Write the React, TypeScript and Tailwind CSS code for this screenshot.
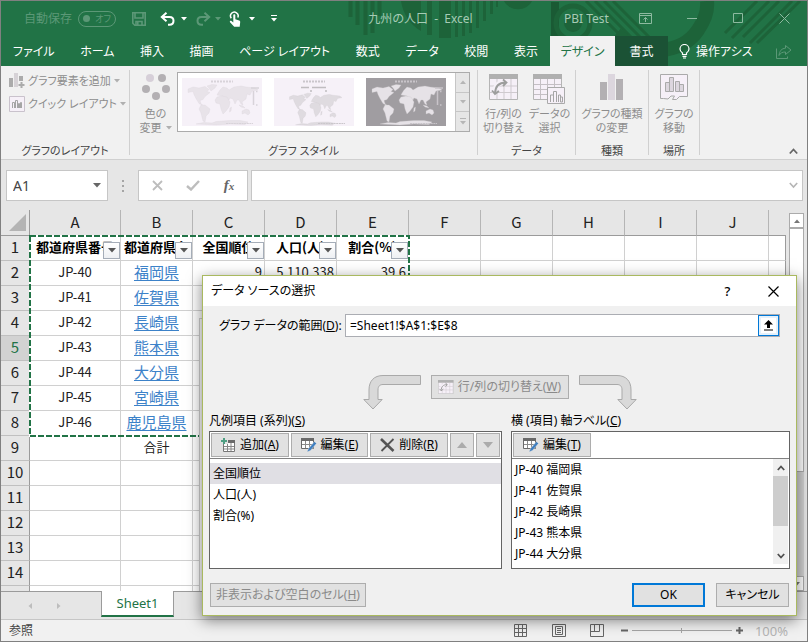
import { useState } from 'react';
import type { ReactNode } from 'react';

const tabs = ['ファイル', 'ホーム', '挿入', '描画', 'ページ レイアウト', '数式', 'データ', '校閲', '表示'];
const columns = ['A', 'B', 'C', 'D', 'E', 'F', 'G', 'H', 'I', 'J', ''];
const headings = ['都道府県番号', '都道府県名', '全国順位', '人口(人)', '割合(%)'];
const prefectures = [
  { code: 'JP-40', name: '福岡県' },
  { code: 'JP-41', name: '佐賀県' },
  { code: 'JP-42', name: '長崎県' },
  { code: 'JP-43', name: '熊本県' },
  { code: 'JP-44', name: '大分県' },
  { code: 'JP-45', name: '宮崎県' },
  { code: 'JP-46', name: '鹿児島県' },
];
const rows = Array.from({ length: 14 }, (_, i) => i + 1);
const series = ['全国順位', '人口(人)', '割合(%)'];

const Caret = ({ className = '' }: { className?: string }) => (
  <svg viewBox="0 0 6 4" className={`w-[6px] h-[4px] shrink-0 fill-current ${className}`}>
    <path d="M0 0h6L3 3.5z" />
  </svg>
);

const SaveIcon = () => (
  <svg viewBox="0 0 14 14" className="w-[14px] h-[14px] text-[#5c9877]" fill="none" stroke="currentColor" strokeWidth="1.6">
    <path d="M.8.8h12.4v12.4H2.8L.8 11.2zM3 1v5h8V1M4 13V9.5h6V13" />
    <path d="M5.8 10v3" />
  </svg>
);

const UndoIcon = ({ className }: { className: string }) => (
  <svg viewBox="0 0 15 14" className={`w-[15px] h-[14px] ${className}`} fill="none" stroke="currentColor" strokeWidth="2">
    <path d="M2 5h7.5c2.6 0 4 1.600 4 3.800S12 12.800 9.500 12.800H8" />
    <path d="M6.500.8L1.800 5l4.700 4.200" />
  </svg>
);

const TouchIcon = () => (
  <svg viewBox="0 0 12 16" className="w-[12px] h-[16px] text-white" fill="none">
    <path d="M2.300 7.200A3.800 3.800 0 1 1 8.800 6.500" stroke="currentColor" strokeWidth="1.500" />
    <path d="M4.300 4.200c0-1.400 2-1.400 2 0v4l3.800 1.200c.9.300 1.200.8 1.100 1.700l-.5 4.700H5.200L1 11.200c-.7-1 .6-1.900 1.500-1.200l1.800 1.400z" fill="currentColor" />
  </svg>
);

const ChartElementIcon = () => (
  <svg viewBox="0 0 16 16" className="w-4 h-4 shrink-0">
    <path d="M0 5h4v9H0z" fill="#ababab" />
    <path d="M5 0h4v14H5z" fill="#d6d2d6" />
    <path d="M10 3h4v5h-4z" fill="#ababab" />
    <path d="M12.500 9v6M9.500 12h6" stroke="#ababab" strokeWidth="2" />
  </svg>
);

const QuickLayoutIcon = () => (
  <svg viewBox="0 0 16 16" className="w-4 h-4 shrink-0" fill="none">
    <path d="M.5.5h15v15H.5z" fill="#f6f0f8" stroke="#c9c2cc" />
    <path d="M3.500 12V6.500h2V12M6.500 12V4.500h2V12M9.500 12V7.500h1V12M11.500 12V6.500h1V12" stroke="#a5a5a5" />
  </svg>
);

const ColorDotsIcon = () => (
  <svg viewBox="0 0 28 26" className="w-[28px] h-[26px]" fill="#b3b0b3">
    <circle cx="8" cy="4" r="4" fill="#d6cfd8" />
    <circle cx="20" cy="4" r="4" />
    <circle cx="4" cy="15" r="4" />
    <circle cx="24" cy="15" r="4" />
    <circle cx="14" cy="22" r="4" />
  </svg>
);

const SwapTableIcon = ({ className }: { className: string }) => (
  <svg viewBox="0 0 30 26" className={className} fill="none">
    <path d="M.5.5h28v25H.5z" fill="#f6f0f8" stroke="#b5b5b5" />
    <path d="M0 0h29v5H0z" fill="#b0b0b0" />
    <path d="M1 12h27M1 18.500h27M8 5v20M15 5v20M22 5v20" stroke="#cfcacf" />
    <path d="M5.500 19C6 11 10 8 17 8" stroke="#f6f0f8" strokeWidth="5" />
    <path d="M6 20C6 12 10 8.500 17 8.500M14 5.500l3.500 3-3.500 3.500M3 16.500L6 20l4-3" stroke="#9d9d9d" strokeWidth="1.800" />
  </svg>
);

const SelectDataIcon = () => (
  <svg viewBox="0 0 33 30" className="w-[33px] h-[30px]" fill="none">
    <path d="M.5.5h28v25H.5z" fill="#f6f0f8" stroke="#b5b5b5" />
    <path d="M0 0h29v5H0z" fill="#b0b0b0" />
    <path d="M1 10.500h27M1 15.500h27M1 20.500h27M7.500 5v20M14.500 5v20M21.500 5v20" stroke="#c4bfc4" />
    <path d="M14.500 13.500h17v16h-17z" fill="#f6f0f8" stroke="#aaa" />
    <path d="M17.500 28v-7h3v7M20.500 28V17.500h3V28M25.500 28v-7h2v7M27.500 28v-5h2v5z" stroke="#a5a5a5" />
  </svg>
);

const ChartTypeIcon = () => (
  <svg viewBox="0 0 24 26" className="w-[24px] h-[26px]">
    <path d="M0 8h7v18H0z" fill="#b3b0b3" />
    <path d="M8 0h7v26H8z" fill="#dcd6de" />
    <path d="M16 5h7v21h-7z" fill="#b3b0b3" />
  </svg>
);

const MoveChartIcon = () => (
  <svg viewBox="0 0 28 26" className="w-[28px] h-[26px]" fill="none" stroke="#aaa">
    <path d="M3.500 24.500H.5V.5h27v22h-8l-3 3h-4l2-3.500h-3.500l-3 3z" fill="#f6f0f8" />
    <path d="M5.500 17.500v-9h4v9zM9.500 17.500V3.500h4v14zM15.500 17.500v-10h4v10zM19.500 17.500v-7h4v7z" fill="#dcd6de" />
  </svg>
);

const EditTableIcon = () => (
  <svg viewBox="0 0 16 16" className="w-4 h-4 shrink-0" fill="none">
    <path d="M.5 1.500h12v10H.5z" fill="#fff" stroke="#6a6a6a" />
    <path d="M0 1h13v3H0z" fill="#6a6a6a" />
    <path d="M1 7.500h11M4.500 4v7M8.500 4v7" stroke="#8a8a8a" />
    <path d="M13.500 4.500L7.500 11.500 6 15l3.500-1.500 6-7z" fill="#3f7fc0" stroke="#e1e1e1" strokeWidth=".5" />
  </svg>
);

const AddTableIcon = () => (
  <svg viewBox="0 0 15 15" className="w-[15px] h-[15px] shrink-0" fill="none">
    <path d="M2.500 3.500h11v10h-11z" fill="#fff" stroke="#777" />
    <path d="M2 2h12v3H2z" fill="#6a6a6a" />
    <path d="M3 8.500h10M3 11h10M6.500 5v8M10 5v8" stroke="#888" />
    <path d="M0 0h7v6H0z" fill="#e1e1e1" />
    <path d="M3 0v6M0 3h6" stroke="#4f9f83" strokeWidth="2" />
  </svg>
);

const DeleteIcon = () => (
  <svg viewBox="0 0 15 14" className="w-[15px] h-[14px] shrink-0" fill="none" stroke="#555">
    <path d="M1 1l12.500 12" strokeWidth="2.600" />
    <path d="M13.500 1L1.500 13" strokeWidth="1.800" />
  </svg>
);

// Flow arrow from the swap button down to a list; the right one is mirrored
const BentArrow = ({ className = '' }: { className?: string }) => (
  <svg viewBox="0 0 58 35" className={`w-[58px] h-[35px] ${className}`} fill="#d9d9d9" stroke="#a9a9a9">
    <path d="M57.500.5H20C11 .5 6 6 6 15v9.500H.8L10 34l9.200-9.500H15V15c0-4 2-5.500 5-5.500h37.500z" />
  </svg>
);

const MapThumb = ({ bg, land, border, legendTop }: { bg: string; land: string; border: string; legendTop?: boolean }) => (
  <svg viewBox="0 0 80 48" className="w-[80px] h-[48px] block">
    <rect width="80" height="48" fill={bg} />
    <path d="M29 3.500h22" stroke={border} strokeWidth="2" strokeDasharray="2 1" />
    <g fill={land} stroke={border} strokeWidth=".3" transform={legendTop ? 'translate(11 10) scale(.75 .8)' : undefined}>
      <path d="M6 11l5-2 6 1 6-1.500 4 3-2 2 3 1-5 4-2 3-3 1 1 3 2 2-4-2-3-5-2-4-1-3-5 1z" />
      <path d="M25 8l5-1.500 5 .5-2 3-4 3-2-3z" />
      <path d="M19 27l4 0 5 4-1 4-3 3-1 6-2-1-2-8-2-4z" />
      <path d="M35 17l1-2 2-3 3-3 4 1 2 2 5-3 7-1 5 1 9 1 3 2-6 1-2 4-3-1-1 5-4 3 1 3-2-1-2-4-2 0-2 4-2-5-3-1-1 2-4-1-2-3z" />
      <path d="M35 19l5-1 5 1 3 5-1 5-3 4-3 3-2-5-1-5-4-1-1-3z" />
      <path d="M48 30l1.500-1-.5 4-1.500 1zM57 27l4 1 2 2-4-1z" />
      <path d="M60 33l4-2 3 1 1 3-2 2-3-2-3 1z" />
      <path d="M14 46l8-1.500 8 .5 4-1.500 14-1 10 0 8 1.500-3 2.500-15-.5-14 1z" />
    </g>
    {legendTop ? (
      <path d="M27 9.500h8M38 9.500h14M36 13h2M51 13h2" stroke="#c0bdc0" strokeWidth="1.500" />
    ) : (
      <path d="M69 10h8M71.500 13v14M74 13.500h1.500M74 27h1.500" stroke={border} strokeWidth="1.500" />
    )}
    <path d="M44 45.500h27" stroke={border} strokeWidth="1" strokeDasharray="2 .6" />
  </svg>
);

const RibbonGroup = ({ label, className = '', children }: { label: string; className?: string; children: ReactNode }) => (
  <section className={`flex flex-col justify-between shrink-0 my-1 border-r border-[#d0d0d0] ${className}`}>
    {children}
    <div className="h-4 -mb-1 shrink-0 leading-[16px] text-center text-[#444]">{label}</div>
  </section>
);

const BigButton = ({ icon, lines, className = '' }: { icon: ReactNode; lines: ReactNode[]; className?: string }) => (
  <button className={`flex flex-col items-center text-[#8d8d8d] leading-[14px] ${className}`}>
    <span className="h-[37px] flex items-start justify-center pt-1">{icon}</span>
    {lines.map((line, i) => (
      <span key={i} className="flex items-center gap-1 whitespace-nowrap">{line}</span>
    ))}
  </button>
);

const DialogButton = ({ className = '', disabled, children }: { className?: string; disabled?: boolean; children: ReactNode }) => (
  <button
    disabled={disabled}
    className={`h-[24px] flex items-center justify-center gap-1 bg-[#e1e1e1] border border-[#adadad] whitespace-nowrap ${disabled ? 'text-[#8a8a8a]' : ''} ${className}`}
  >
    {children}
  </button>
);

const TitleBar = () => (
  <div className="relative h-[35px] flex items-center text-[#a6cbb5]">
    <div className="w-[276px] pl-[23px] flex items-center shrink-0 text-[#5c9877]">
      <label htmlFor="autosave" className="w-[55px]">自動保存</label>
      <button id="autosave" className="w-[38px] h-[16px] border border-[#5c9877] rounded-full flex items-center justify-between pl-1 pr-1 text-[9px] leading-none">
        <span className="w-[7px] h-[7px] rounded-full bg-[#5c9877]" />
        オフ
      </button>
      <button aria-label="上書き保存" className="ml-4"><SaveIcon /></button>
      <button aria-label="元に戻す" className="ml-[14px] flex items-center gap-[6px] text-white"><UndoIcon className="text-white" /><Caret /></button>
      <button aria-label="やり直し" className="ml-[9px] flex items-center gap-1"><UndoIcon className="-scale-x-100" /><Caret /></button>
      <button aria-label="タッチ" className="ml-2 flex items-center gap-2 text-white"><TouchIcon /><Caret /></button>
      <button aria-label="カスタマイズ" className="ml-4 flex flex-col items-center gap-[2px] text-white">
        <span className="w-[6px] h-px bg-white" />
        <Caret />
      </button>
    </div>
    <div className="flex-1 text-center whitespace-pre">九州の人口  -  Excel</div>
    <div className="w-[243px] shrink-0 flex items-center text-[#8dbaa0]">
      <span className="w-[75px] text-[#a6cbb5] whitespace-nowrap">PBI Test</span>
      <button aria-label="リボンの表示オプション" className="w-[48px]">
        <svg viewBox="0 0 13 11" className="w-[13px] h-[11px]" fill="none" stroke="currentColor">
          <path d="M.5.500h12v10H.5zM.5 2.500h12M6.500 9V4.500M4.500 6.500l2-2 2 2" />
        </svg>
      </button>
      <button aria-label="最小化" className="w-[46px]"><svg viewBox="0 0 11 11" className="w-[11px] h-[11px]" stroke="currentColor"><path d="M0 5.500h10" /></svg></button>
      <button aria-label="最大化" className="w-[46px]"><svg viewBox="0 0 11 11" className="w-[11px] h-[11px]" fill="none" stroke="currentColor"><path d="M.5.500h9v9h-9z" /></svg></button>
      <button aria-label="閉じる"><svg viewBox="0 0 11 11" className="w-[11px] h-[11px]" stroke="currentColor"><path d="M.5.500l10 10M10.500.500l-10 10" /></svg></button>
    </div>
  </div>
);

const HeaderPattern = () => (
  <svg viewBox="0 0 462 65" className="absolute right-0 top-0 w-[462px] h-[65px]" fill="none" stroke="#1d6339">
    <path d="M5.500 0v16M12.500 0v24M20.500 0v34M27.500 0v32M34.500 0v15" strokeWidth="4" />
    <path d="M56 0c2 13 9 24 20 30V0zM82 0h5v34h-5zM94 0h12v37H94zM110 0h3v36h-3zM117 0h3v35h-3zM124 0h3v32h-3zM131 0h3v27h-3zM138 0h3v20h-3zM145 0h3v13h-3zM151 0h2v6h-2z" fill="#1d6339" stroke="none" />
    <path d="M159 0a15 13 0 0 0 28 0z" fill="#1d6339" stroke="none" />
    <path d="M206 1h8v34h-8z" fill="#1a5a34" stroke="none" />
    <circle cx="228" cy="22" r="17" strokeWidth="5" />
    <circle cx="228" cy="22" r="9" fill="#1d6339" stroke="none" />
    <path d="M241 0l36 36M250 0l36 36M259 0l36 36M268 0l36 36" strokeWidth="3" />
    <path d="M271 33c28 24 66 20 82-4 7-10 10-20 9-29" strokeWidth="14" />
    <path d="M380 32L412 0M387 37L424 0M398 36L434 0M405 42L447 0M412 42L455 0" strokeWidth="3" />
  </svg>
);

const TabRow = () => (
  <nav className="relative h-[30px] flex text-white leading-[29px]">
    <div className="flex-1 flex justify-between">
      {tabs.map((tab) => (
        <button key={tab} className="shrink-0 px-3 whitespace-nowrap">{tab}</button>
      ))}
    </div>
    <button className="w-[65px] shrink-0 bg-[#f1f1f1] text-[#217346]">デザイン</button>
    <button className="w-[53px] shrink-0 bg-[#1b5235]">書式</button>
    <button className="w-[96px] shrink-0 flex items-center pl-[11px] gap-[6px] whitespace-nowrap">
      <svg viewBox="0 0 11 15" className="w-[11px] h-[15px] shrink-0" fill="none" stroke="currentColor" strokeWidth="1.200">
        <path d="M3.500 10.500V9C2 8 1 6.800 1 5a4.500 4.500 0 0 1 9 0c0 1.800-1 3-2.500 4v1.500zM3.500 12.300h4M4 14h3" />
      </svg>
      操作アシス
    </button>
    <button aria-label="共有" className="w-[43px] shrink-0 flex items-center pl-3 text-[#5c9877]">
      <svg viewBox="0 0 16 15" className="w-4 h-[15px]" fill="none" stroke="currentColor">
        <path d="M.5 4.500v10h11v-2M9.500 1.500l5.500 4.500-5.500 4.500V8C6 8 4.500 9 3 11.500 3.500 7 5.500 4.500 9.500 4.200z" />
      </svg>
    </button>
  </nav>
);

const Ribbon = () => (
  <div className="h-[94px] shrink-0 flex bg-[#f1f1f1] border-b border-[#d0d0d0] text-[11px]">
    <RibbonGroup label="グラフのレイアウト" className="w-[129px]">
      <div className="flex flex-col gap-[7px] pl-2 pt-[3px] text-[#8d8d8d]">
        <button className="flex items-center gap-[3px] h-4 whitespace-nowrap"><ChartElementIcon />グラフ要素を追加<Caret className="text-[#b0b0b0]" /></button>
        <button className="flex items-center gap-[3px] h-4 whitespace-nowrap"><QuickLayoutIcon />クイック レイアウト<Caret className="text-[#b0b0b0]" /></button>
      </div>
    </RibbonGroup>
    <RibbonGroup label="グラフ スタイル" className="w-[348px]">
      <div className="flex">
        <BigButton className="w-[47px] pl-1" icon={<ColorDotsIcon />} lines={['色の', <>変更<Caret className="text-[#b0b0b0]" /></>]} />
        <div className="mt-[2px] w-[293px] h-[60px] flex border border-[#ababab] bg-white">
          <div className="flex-1 flex justify-between items-center pl-1 pr-[9px]">
            <button><MapThumb bg="#f6f1f8" land="#e8e3e9" border="#d8d3d9" /></button>
            <button><MapThumb bg="#f6f1f8" land="#dfdbe0" border="#cac6cb" legendTop /></button>
            <button><MapThumb bg="#a09da1" land="#e6e2e7" border="#c8c4c9" /></button>
          </div>
          <div className="w-[14px] flex flex-col border-l border-[#c6c6c6] bg-[#e6e6e6] text-[#b5b5b5] divide-y divide-[#c6c6c6]">
            <button aria-label="上へ" className="flex-1 flex items-center justify-center"><Caret className="rotate-180" /></button>
            <button aria-label="下へ" className="flex-1 flex items-center justify-center"><Caret /></button>
            <button aria-label="その他" className="flex-1 flex flex-col gap-[2px] items-center justify-center"><span className="w-[6px] h-px bg-[#b5b5b5]" /><Caret /></button>
          </div>
        </div>
      </div>
    </RibbonGroup>
    <RibbonGroup label="データ" className="w-[98px]">
      <div className="flex justify-center gap-1">
        <BigButton className="w-[42px]" icon={<SwapTableIcon className="w-[30px] h-[26px]" />} lines={['行/列の', '切り替え']} />
        <BigButton className="w-[42px]" icon={<SelectDataIcon />} lines={['データの', '選択']} />
      </div>
    </RibbonGroup>
    <RibbonGroup label="種類" className="w-[73px]">
      <BigButton icon={<ChartTypeIcon />} lines={['グラフの種類', 'の変更']} />
    </RibbonGroup>
    <RibbonGroup label="場所" className="w-[51px]">
      <BigButton icon={<MoveChartIcon />} lines={['グラフの', '移動']} />
    </RibbonGroup>
    <button aria-label="リボンを折りたたむ" className="ml-auto mr-[9px] mb-1 self-end">
      <svg viewBox="0 0 9 7" className="w-[9px] h-[7px]" fill="none" stroke="#666" strokeWidth="1.800"><path d="M.8 5.500l3.700-4 3.700 4" /></svg>
    </button>
  </div>
);

const FormulaBar = () => (
  <div className="h-[50px] shrink-0 flex pt-[10px] pl-[5px] pr-1">
    <div className="w-[102px] h-[31px] flex items-center shrink-0 bg-white border border-[#c6c6c6] pl-[6px] pr-[6px] text-[#666]">
      <input aria-label="名前ボックス" defaultValue="A1" className="w-0 flex-1 outline-none text-[14px] text-[#444]" />
      <svg viewBox="0 0 8 5" className="w-2 h-[5px] fill-current"><path d="M0 0h8L4 4.500z" /></svg>
    </div>
    <div className="w-[30px] h-[31px] flex flex-col gap-[3px] items-center justify-center shrink-0">
      <span className="size-[2px] bg-[#a5a5a5]" /><span className="size-[2px] bg-[#a5a5a5]" /><span className="size-[2px] bg-[#a5a5a5]" />
    </div>
    <div className="w-[110px] h-[31px] mr-[3px] flex items-center shrink-0 bg-white border border-[#c6c6c6]">
      <button aria-label="キャンセル" className="w-9 flex justify-center"><svg viewBox="0 0 11 11" className="w-[11px] h-[11px]" stroke="#bdbdbd" strokeWidth="1.800"><path d="M1 1l9 9M10 1l-9 9" /></svg></button>
      <button aria-label="入力" className="w-9 flex justify-center"><svg viewBox="0 0 14 11" className="w-[14px] h-[11px]" fill="none" stroke="#bdbdbd" strokeWidth="2.400"><path d="M1 6l4 3.500L13 1" /></svg></button>
      <button aria-label="関数の挿入" className="w-9 text-center font-['Liberation_Serif',serif] italic font-bold text-[15px] text-[#666]">f<span className="text-[11px]">x</span></button>
    </div>
    <div className="flex-1 h-[31px] flex items-center bg-white border border-[#c6c6c6]">
      <input aria-label="数式バー" className="flex-1 h-full outline-none px-1" />
      <svg viewBox="0 0 9 7" className="w-[9px] h-[7px] mr-1" fill="none" stroke="#b5b5b5" strokeWidth="1.600"><path d="M.8 1l3.700 4L8.200 1" /></svg>
    </div>
  </div>
);

const CellContent = ({ row, col }: { row: number; col: number }) => {
  if (row === 1 && headings[col]) {
    return (
      <div className="relative h-6 leading-[21px] text-center font-bold text-black overflow-hidden">
        <span className="whitespace-nowrap">{headings[col]}</span>
        <button aria-label={`${headings[col]} フィルター`} className="absolute right-0 bottom-px w-[17px] h-[17px] flex items-center justify-center bg-gradient-to-b from-white to-[#eef0f3] border border-[#a5adb8] text-[#555]">
          <svg viewBox="0 0 8 5" className="w-[8px] h-[5px] fill-current"><path d="M0 0h8L4 4.500z" /></svg>
        </button>
      </div>
    );
  }
  const pref = prefectures[row - 2];
  if (pref && col === 0) return <div className="pb-0.5 text-center">{pref.code}</div>;
  if (pref && col === 1) return <div className="pb-0.5 text-center text-[15px]"><a href="#" className="text-[#3c82c9] underline underline-offset-2">{pref.name}</a></div>;
  if (row === 9 && col === 1) return <div className="pb-0.5 text-center">合計</div>;
  if (row === 2 && col > 1 && col < 5) return <div className="pb-0.5 text-right pr-[2px]">{['9', '5,110,338', '39.6'][col - 2]}</div>;
  return null;
};

const Sheet = () => (
  <div className="flex-1 min-h-0 flex overflow-hidden">
    <div className="relative flex-1 min-w-0 overflow-hidden bg-white">
      <table className="w-full table-fixed border-separate border-spacing-0 text-[13px] leading-[20px] text-[#222] font-['Noto_Sans_CJK_JP',sans-serif]">
        <colgroup>
          <col className="w-[29px]" />
          <col className="w-[91px]" />
          {columns.slice(1, 10).map((c) => <col key={c} className="w-[72px]" />)}
          <col />
        </colgroup>
        <thead className="text-[15px] bg-[#e6e6e6]">
          <tr>
            <th className="h-[26px] p-0 border-r border-b border-[#9b9b9b]">
              <svg viewBox="0 0 17 17" className="w-[17px] h-[17px] ml-2"><path d="M17 0v17H0z" fill="#b4b4b4" /></svg>
            </th>
            {columns.map((c) => (
              <th key={c} className={`h-[26px] p-0 pb-0.5 font-normal border-b border-b-[#9b9b9b] ${c ? 'border-r border-r-[#b5b5b5]' : ''}`}>{c}</th>
            ))}
          </tr>
        </thead>
        <tbody>
          {rows.map((row) => (
            <tr key={row}>
              <th className={`h-[25px] p-0 pb-0.5 font-normal text-[15px] border-b border-b-[#c0c0c0] border-r ${row === 5 ? 'bg-[#d2d2d2] text-[#217346] border-r-[#217346]' : 'bg-[#e6e6e6] border-r-[#9b9b9b]'}`}>{row}</th>
              {columns.map((c, col) => (
                <td key={c} className={`h-[25px] p-0 border-b border-r border-b-[#d0d0d0] ${c ? 'border-r-[#d0d0d0]' : 'border-r-[#9b9b9b]'}`}>
                  <CellContent row={row} col={col} />
                </td>
              ))}
            </tr>
          ))}
          <tr>
            <th className="h-[25px] bg-[#e6e6e6] border-r border-[#9b9b9b]" />
            {columns.map((c) => <td key={c} className={`border-r ${c ? 'border-[#d0d0d0]' : 'border-[#9b9b9b]'}`} />)}
          </tr>
        </tbody>
      </table>
      {/* Marching ants around A1:E8 */}
      <svg className="absolute left-[28px] top-[25px] w-[381px] h-[202px] pointer-events-none" fill="none">
        <rect x="1" y="1" width="379" height="200" stroke="#fff" strokeWidth="2" />
        <rect x="1" y="1" width="379" height="200" stroke="#217346" strokeWidth="2" strokeDasharray="6 2" />
      </svg>
      {/* Chart object, mostly under the dialog */}
      <div className="absolute left-[198px] right-8 top-[108px] bottom-0 bg-white border-l border-t border-[#d0d0d0]" />
    </div>
    <div className="w-[21px] shrink-0 flex flex-col pl-[3px] pr-[3px] pt-[3px]">
      <button aria-label="上にスクロール" className="h-[15px] flex items-center justify-center bg-white border border-[#ababab] text-[#777]"><Caret className="rotate-180" /></button>
      <div className="h-[244px] bg-white border border-[#ababab]" />
      <div className="flex-1 bg-[#d0d0d0]" />
      <button aria-label="下にスクロール" className="h-[15px] flex items-center justify-center bg-white border border-[#ababab] text-[#777]"><Caret /></button>
    </div>
  </div>
);

const SheetTabs = () => (
  <div className="h-[28px] shrink-0 flex border-t border-[#9b9b9b]">
    <div className="w-[100px] pr-[14px] flex items-center justify-center gap-[23px] text-[#bdbdbd]">
      <button aria-label="前のシート"><Caret className="rotate-90" /></button>
      <button aria-label="次のシート"><Caret className="-rotate-90" /></button>
    </div>
    <button className="-mt-px w-[73px] h-[26px] bg-white border-x border-[#9b9b9b] border-b-2 border-b-[#217346] text-[#217346] text-[13px]">Sheet1</button>
  </div>
);

const StatusBar = () => (
  <footer className="h-[22px] shrink-0 flex items-center bg-[#f1f1f1] border-t border-[#c6c6c6] pl-2 pr-[19px] text-[#444]">
    <span>参照</span>
    <div className="ml-auto flex items-center text-[#666]">
      <button aria-label="標準" className="mr-[25px]"><svg viewBox="0 0 13 13" className="w-[13px] h-[13px]" fill="none" stroke="currentColor"><path d="M.5.500h12v12H.5zM.5 4.500h12M.5 8.500h12M4.500.500v12M8.500.500v12" /></svg></button>
      <button aria-label="ページ レイアウト" className="mr-[24px]"><svg viewBox="0 0 14 13" className="w-[14px] h-[13px]" fill="none" stroke="currentColor"><path d="M.5.500h13v12H.5zM3.500 2.500h7v8h-7zM5 4.500h4M5 6.500h4M5 8.500h4" /></svg></button>
      <button aria-label="改ページ プレビュー" className="mr-[17px]"><svg viewBox="0 0 14 13" className="w-[14px] h-[13px]" fill="none" stroke="currentColor"><path d="M.5.500h13v12H.5zM.5 7.500h9M4.500.500v7M9.500.500v7" /></svg></button>
      <button aria-label="縮小" className="mr-1"><svg viewBox="0 0 7 7" className="w-[7px] h-[7px]" stroke="currentColor" strokeWidth="2"><path d="M0 3.500h7" /></svg></button>
      <div className="w-[100px] h-px bg-[#a5a5a5] flex items-center justify-center"><span className="w-px h-[5px] shrink-0 bg-[#a5a5a5]" /></div>
      <button aria-label="拡大" className="ml-1"><svg viewBox="0 0 7 7" className="w-[7px] h-[7px]" stroke="currentColor" strokeWidth="2"><path d="M0 3.500h7M3.500 0v7" /></svg></button>
      <span className="ml-3 text-[13px] text-[#b5b5b5]">100%</span>
    </div>
  </footer>
);

const DataSourceDialog = () => {
  const [selected, setSelected] = useState(series[0]);

  return (
    <div role="dialog" aria-labelledby="dialog-title" className="absolute left-[201px] right-[10px] bottom-[25px] bg-[#f0f0f0] border border-[#a9b95f] shadow-[0_4px_14px_rgba(0,0,0,0.5)] text-black">
      <div className="h-[30px] flex items-center bg-white pl-2">
        <h2 id="dialog-title" className="flex-1">データ ソースの選択</h2>
        <button aria-label="ヘルプ" className="w-[45px] text-[13px] font-medium">?</button>
        <button aria-label="閉じる" className="w-[46px] flex justify-center"><svg viewBox="0 0 11 11" className="w-[11px] h-[11px]" stroke="#000" strokeWidth="1.200"><path d="M.5.500l10 10M10.500.500l-10 10" /></svg></button>
      </div>

      <div className="flex items-center mt-2 pl-4 pr-4">
        <label htmlFor="range" className="w-[126px] shrink-0 whitespace-nowrap">グラフ データの範囲(<u>D</u>):</label>
        <div className="flex-1 h-[23px] flex bg-white border border-[#abadb3]">
          <input id="range" defaultValue="=Sheet1!$A$1:$E$8" className="flex-1 min-w-0 px-1 outline-none" />
          <button aria-label="範囲を選択" className="w-[21px] flex items-center justify-center border border-[#0078d7] bg-[#e5f1fb]">
            <span className="w-[15px] h-[15px] bg-white flex items-center justify-center">
              <svg viewBox="0 0 9 11" className="w-[9px] h-[11px]"><path d="M4.500 0L9 4.500H6V8H3V4.500H0zM0 9.500h9v1H0z" /></svg>
            </span>
          </button>
        </div>
      </div>

      <div className="mt-[38px] flex justify-center items-start gap-[10px]">
        <BentArrow />
        <DialogButton disabled className="w-[138px]"><SwapTableIcon className="w-4 h-[14px]" /><span>行/列の切り替え(<u>W</u>)</span></DialogButton>
        <BentArrow className="-scale-x-100" />
      </div>

      <div className="flex gap-[9px] pl-[6px] pr-[6px] mt-px">
        <section className="w-[293px] shrink-0">
          <h3 className="leading-[20px]">凡例項目 (系列)(<u>S</u>)</h3>
          <div className="h-[138px] bg-white border border-[#646464]">
            <div className="h-[27px] flex gap-[2px] p-px border-b border-[#828282]">
              <DialogButton className="w-[78px]"><AddTableIcon /><span>追加(<u>A</u>)</span></DialogButton>
              <DialogButton className="w-[77px]"><EditTableIcon /><span>編集(<u>E</u>)</span></DialogButton>
              <DialogButton className="w-[78px]"><DeleteIcon /><span>削除(<u>R</u>)</span></DialogButton>
              <DialogButton disabled className="w-[24px] text-[#ababab]"><svg viewBox="0 0 10 6" className="w-[10px] h-[6px] fill-[#ababab]"><path d="M0 6h10L5 0z" /></svg></DialogButton>
              <DialogButton disabled className="w-[24px] text-[#ababab]"><svg viewBox="0 0 10 6" className="w-[10px] h-[6px] fill-[#ababab]"><path d="M0 0h10L5 6z" /></svg></DialogButton>
            </div>
            <ul role="listbox" className="pt-1 leading-[21px]">
              {series.map((name) => (
                <li key={name} role="option" aria-selected={name === selected} onClick={() => setSelected(name)} className={`h-[21px] pl-[3px] ${name === selected ? 'bg-[#e0dfe4]' : ''}`}>{name}</li>
              ))}
            </ul>
          </div>
        </section>

        <section className="flex-1 min-w-0">
          <h3 className="leading-[20px]">横 (項目) 軸ラベル(<u>C</u>)</h3>
          <div className="h-[138px] bg-white border border-[#646464] flex flex-col">
            <div className="h-[27px] shrink-0 flex p-px border-b border-[#828282]">
              <DialogButton className="w-[78px]"><EditTableIcon /><span>編集(<u>T</u>)</span></DialogButton>
            </div>
            <div className="flex-1 min-h-0 flex">
              <ul role="listbox" className="flex-1 overflow-hidden leading-[21px]">
                {prefectures.slice(0, 5).map(({ code, name }) => (
                  <li key={code} role="option" aria-selected={false} className="h-[21px] pl-[3px]">{code} {name}</li>
                ))}
              </ul>
              <div className="w-[15px] mr-px mb-1 flex flex-col justify-between items-center bg-[#f0f0f0]">
                <button aria-label="上へ" className="h-[17px]"><svg viewBox="0 0 8 6" className="w-2 h-[6px]" fill="none" stroke="#505050" strokeWidth="1.800"><path d="M.8 5L4 1.500 7.200 5" /></svg></button>
                <div className="w-full h-[50px] mb-auto bg-[#cdcdcd]" />
                <button aria-label="下へ" className="h-[17px]"><svg viewBox="0 0 8 6" className="w-2 h-[6px]" fill="none" stroke="#505050" strokeWidth="1.800"><path d="M.8 1L4 4.500 7.200 1" /></svg></button>
              </div>
            </div>
          </div>
        </section>
      </div>

      <div className="flex items-center pt-[14px] pb-2 pl-[7px] pr-[7px]">
        <DialogButton disabled className="w-[156px]"><span>非表示および空白のセル(<u>H</u>)</span></DialogButton>
        <button className="ml-auto w-[73px] h-[24px] bg-[#e1e1e1] border-2 border-[#0078d7]">OK</button>
        <button className="ml-[11px] w-[73px] h-[24px] bg-[#e1e1e1] border border-[#adadad]">キャンセル</button>
      </div>
    </div>
  );
};

export default function App() {
  return (
    <div className="relative h-screen flex flex-col overflow-hidden border border-[#808080] bg-[#e6e6e6] text-[12px] leading-[16px] font-['Noto_Sans','Noto_Sans_CJK_JP',sans-serif] [font-feature-settings:'palt']">
      <header className="relative h-[65px] shrink-0 bg-[#217346]">
        <HeaderPattern />
        <TitleBar />
        <TabRow />
      </header>
      <Ribbon />
      <FormulaBar />
      <Sheet />
      <SheetTabs />
      <StatusBar />
      <DataSourceDialog />
    </div>
  );
}
